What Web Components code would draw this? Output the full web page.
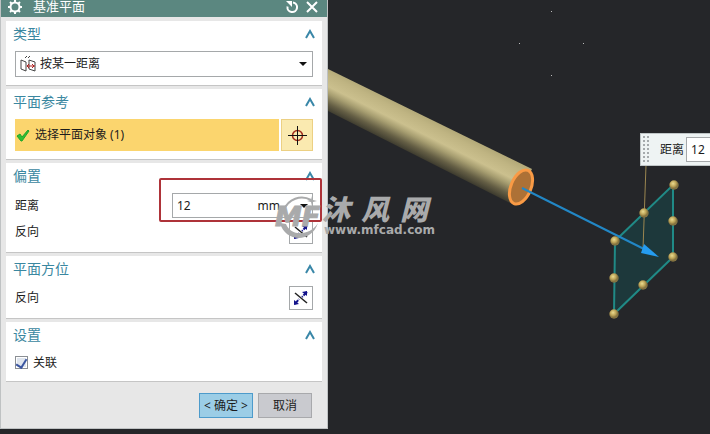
<!DOCTYPE html>
<html lang="zh-CN">
<head>
<meta charset="utf-8">
<title>基准平面</title>
<style>
    body {
        margin: 0;
        background: #252629;
        color: #1c1c1c;
        font: 12px/16px "Noto Sans", "Noto Sans CJK SC", sans-serif;
    }
</style>
</head>
<body>
<cad-app></cad-app>

<script>
class CadElement extends HTMLElement {
    constructor() {
        super()
        this.attachShadow({mode: "open"})
    }
    connectedCallback() {
        const template = document.createElement("template")
        template.innerHTML = `<style>
        * { box-sizing: border-box; }
        button, input, select { font: inherit; color: inherit; margin: 0; }
        svg { display: block; flex: none; }
        ${this.getStyles()}
        </style>${this.getMarkup()}`
        this.shadowRoot.replaceChildren(template.content.cloneNode(true))
    }
}

class DialogTitle extends CadElement {
    getMarkup() {
        return `
        <svg width="16" height="14" viewBox="0 0 16 14" fill="none" stroke="#fff" stroke-width="2">
            <circle cx="8" cy="7" r="4.500"/>
            <path d="M8 0v3M8 11v3M1 7h3M12 7h3M3 2l2 2M11 10l2 2M13 2l-2 2M5 10l-2 2"/>
        </svg>
        <h1><slot></slot></h1>
        <button aria-label="重置">
            <svg width="14" height="14" viewBox="0 0 14 14" fill="none" stroke="#fff" stroke-width="2">
                <path d="M8 2.500a4.800 4.800 0 1 1-5.500 4"/><path d="M1 1h6v6z" fill="#fff" stroke="none"/>
            </svg>
        </button>
        <button aria-label="关闭">
            <svg width="14" height="14" viewBox="0 0 14 14" stroke="#fff" stroke-width="2"><path d="M2 2l10 10M12 2L2 12"/></svg>
        </button>`
    }
    getStyles() {
        return `
        :host {
            display: flex;
            align-items: center;
            gap: 6px;
            height: 17px;
            padding: 0 8px 4px 6px;
            background: #5b8780;
            color: #fff;
        }
        h1 { flex: 1; margin: 0 0 0 4px; font-size: 13px; font-weight: 400; line-height: 13px; }
        button { border: 0; padding: 0; background: none; }`
    }
}

class DialogSection extends CadElement {
    getMarkup() {
        return `
        <header>
            <h2>${this.getAttribute("heading")}</h2>
            <button aria-label="折叠">
                <svg width="12" height="10" viewBox="0 0 12 10" fill="none" stroke="#3a87a8" stroke-width="2"><path d="M2 9l4-7 4 7"/></svg>
            </button>
        </header>
        <div class="body"><slot></slot></div>`
    }
    getStyles() {
        return `
        :host {
            display: block;
            padding: 0 9px 8px;
            background: #fff;
            box-shadow: 0 1px 0 #c5c5c5;
        }
        header { display: flex; align-items: center; justify-content: space-between; height: 30px; padding-bottom: 4px; }
        h2 { margin: 0 0 0 -2px; color: #3a87a0; font-size: 14px; font-weight: 400; line-height: 20px; }
        header button { border: 0; padding: 0; margin-right: -3px; background: none; }
        .body { display: grid; gap: 2px; }`
    }
}

class TypeSelect extends CadElement {
    getMarkup() {
        return `
        <svg width="16" height="18" viewBox="0 0 16 18" fill="none" stroke="#444">
            <path d="M1 5l5 2v9l-5-2zM9 5l6 2v9l-6-2zM5 3l2-2M8 3l2-2"/>
            <path d="M7 11h8M9 9l-2 2 2 2M12 9l2 2-2 2" stroke="#b02020"/>
        </svg>
        <select aria-label="类型"><option>按某一距离</option></select>
        <svg width="8" height="4" viewBox="0 0 8 4"><path d="M0 0h8L4 4z" fill="#111"/></svg>`
    }
    getStyles() {
        return `
        :host { display: flex; align-items: center; gap: 4px; height: 26px; padding: 0 5px 0 4px; border: 1px solid #a5a8aa; }
        select { flex: 1; height: 24px; padding: 0; border: 0; appearance: none; background: none; }`
    }
}

class PlanePicker extends CadElement {
    getMarkup() {
        return `
        <button class="pick">
            <svg width="14" height="14" viewBox="0 0 14 14"><path d="M1 8l3-2 2 3 6-7 1 1-7 10H5z" fill="#2fbe32" stroke="#22a52a"/></svg>
            <slot></slot>
        </button>
        <button class="target" aria-label="选择对象">
            <svg width="20" height="20" viewBox="0 0 20 20" fill="none">
                <circle cx="10.500" cy="10.500" r="5" stroke="#a02d1e" stroke-width="1.500"/>
                <path d="M10.500 1v19M1 10.500h19" stroke="#111"/>
            </svg>
        </button>`
    }
    getStyles() {
        return `
        :host { display: flex; gap: 2px; height: 32px; }
        button { display: flex; align-items: center; padding: 0; border: 0; background: #fbd56e; }
        .pick { flex: 1; gap: 5px; padding-left: 1px; }
        .target { width: 32px; justify-content: center; border: 1px solid #ecd083; background: #faeab0; }`
    }
}

class DistanceField extends CadElement {
    getMarkup() {
        return `
        <label for="distance">距离</label>
        <div class="field">
            <input id="distance" value="12">
            <span>mm</span>
            <button aria-label="单位"><svg width="8" height="4" viewBox="0 0 8 4"><path d="M0 0h8L4 4z" fill="#111"/></svg></button>
        </div>
        <div class="mark"></div>`
    }
    getStyles() {
        return `
        :host { position: relative; display: flex; align-items: center; height: 25px; }
        label { flex: 1; }
        .field { display: flex; align-items: center; width: 141px; height: 25px; padding: 0 4px; border: 1px solid #a5a8aa; }
        input { flex: 1; min-width: 0; padding: 0; border: 0; outline: 0; background: none; }
        button { margin-left: 20px; border: 0; padding: 0; background: none; }
        .mark { position: absolute; inset: -15px -9px -4px 144px; border: 2px solid #ae3339; border-radius: 2px; pointer-events: none; }`
    }
}

class ReverseRow extends CadElement {
    getMarkup() {
        return `
        <span>反向</span>
        <button aria-label="反向">
            <svg width="16" height="16" viewBox="0 0 16 16">
                <path d="M2 3l12 10" stroke="#222" stroke-width="1.500"/>
                <path d="M14 2L9 7M2 14l4-5" stroke="#14148c" stroke-width="2" stroke-dasharray="5 1"/>
                <path d="M9 2l5-1v5zM6 14l-5 1V10z" fill="#14148c"/>
            </svg>
        </button>`
    }
    getStyles() {
        return `
        :host { display: flex; align-items: center; justify-content: space-between; }
        button { display: grid; place-items: center; width: 24px; height: 24px; padding: 0; border: 1px solid #a5a8aa; background: #fff; }`
    }
}

class CheckRow extends CadElement {
    getMarkup() {
        return `<input type="checkbox" id="linked" checked><label for="linked"><slot></slot></label>`
    }
    getStyles() {
        return `
        :host { display: flex; align-items: center; gap: 5px; height: 21px; }
        input {
            display: grid;
            place-items: start center;
            width: 13px;
            height: 13px;
            appearance: none;
            border: 1px solid #8b8f94;
            background: #dfe5ee;
            box-shadow: inset 0 0 0 1px #fff;
        }
        input:checked::after {
            content: "";
            width: 5px;
            height: 9px;
            border: solid #3a55a0;
            border-width: 0 2px 2px 0;
            transform: rotate(32deg);
        }`
    }
}

class PlaneDialog extends CadElement {
    getMarkup() {
        return `
        <dialog-title>基准平面</dialog-title>
        <main>
            <dialog-section heading="类型"><type-select></type-select></dialog-section>
            <dialog-section heading="平面参考"><plane-picker>选择平面对象 (1)</plane-picker></dialog-section>
            <dialog-section heading="偏置"><distance-field></distance-field><reverse-row></reverse-row></dialog-section>
            <dialog-section heading="平面方位"><reverse-row></reverse-row></dialog-section>
            <dialog-section heading="设置"><check-row>关联</check-row></dialog-section>
        </main>
        <footer>
            <button class="ok">&lt; 确定 &gt;</button>
            <button>取消</button>
        </footer>`
    }
    getStyles() {
        return `
        :host { display: block; border: solid #bfc2c3; border-width: 0 1px 1px; background: #e7e7e7; }
        main { display: grid; gap: 4px; padding: 4px 5px 0; }
        footer { display: flex; justify-content: flex-end; gap: 5px; padding: 12px 15px 10px; }
        footer button { width: 54px; height: 25px; padding: 0; border: 1px solid #a8a9ac; background: #c9cacf; }
        footer .ok { border-color: #4d9bcb; background: #9bcde6; }`
    }
}

class ModelView extends CadElement {
    getMarkup() {
        const handles = [[346, 185], [316, 213], [345, 221], [287, 241], [345, 257], [286, 278], [315, 285], [286, 314]]
        const stars = [[223, 11], [191, 43], [255, 43], [223, 75]]
        return `
        <svg viewBox="0 0 382 434" preserveAspectRatio="xMinYMin">
            <defs>
                <linearGradient id="rod" gradientUnits="userSpaceOnUse" x1="109" y1="122" x2="91" y2="158">
                    <stop offset="0" stop-color="#b3a978"/>
                    <stop offset=".15" stop-color="#bfb482"/>
                    <stop offset=".42" stop-color="#cbc08e"/>
                    <stop offset=".58" stop-color="#a69d70"/>
                    <stop offset=".8" stop-color="#655f45"/>
                    <stop offset="1" stop-color="#39372c"/>
                </linearGradient>
                <radialGradient id="ball" cx=".4" cy=".35">
                    <stop offset="0" stop-color="#eadb91"/>
                    <stop offset=".6" stop-color="#bfa659"/>
                    <stop offset="1" stop-color="#857340"/>
                </radialGradient>
            </defs>
            <path d="M0 69L204 169 186 205 0 111z" fill="url(#rod)"/>
            <ellipse cx="193" cy="187" rx="10" ry="18" transform="rotate(23 193 187)" fill="#ad7136" stroke="#f99a45" stroke-width="3"/>
            <path d="M345 185V257L286 314 287 241z" fill="#1d383b" stroke="#208a86" stroke-width="2"/>
            <path d="M318 165L315 249" stroke="#9b8650"/>
            <path d="M194 188L316 249" stroke="#2287c6" stroke-width="2"/>
            <path d="M316 244L331 257 313 253z" fill="#259cf0"/>
            ${handles.map(([x, y]) => `<circle cx="${x}" cy="${y}" r="4.700" fill="url(#ball)"/>`).join("")}
            ${stars.map(([x, y]) => `<rect x="${x}" y="${y}" width="1" height="1" fill="#bbb"/>`).join("")}
        </svg>
        <div class="float">
            <i></i>
            <label for="offset">距离</label>
            <input id="offset" value="12">
        </div>`
    }
    getStyles() {
        return `
        :host { position: relative; display: block; overflow: hidden; }
        svg { width: 100%; }
        .float {
            position: absolute;
            top: 133px;
            left: 312px;
            right: 0;
            display: flex;
            align-items: center;
            height: 33px;
            border: 1px solid #bfc5c6;
            border-right: 0;
            background: #eef3f3;
        }
        i {
            width: 8px;
            height: 28px;
            margin-left: 2px;
            background: conic-gradient(transparent 75%, #a5aaac 0) 0 0 / 4px 4px;
        }
        label { margin: 0 2px 0 9px; white-space: nowrap; }
        input { flex: 1; min-width: 0; height: 25px; padding: 0 4px; border: 1px solid #a5a8aa; border-right: 0; background: #fff; }`
    }
}

class SiteWatermark extends CadElement {
    getMarkup() {
        return `
        <svg width="54" height="48" viewBox="0 0 54 48">
            <path d="M11 17A19 19 0 0 1 38 7" fill="none" stroke="#a9aaab" stroke-width="2"/>
            <path d="M7 30C12 49 38 51 45 30C37 43 18 44 13 31z" fill="#a9aaab"/>
            <path d="M39 3l1 4 4 1-4 1-1 4-1-4-4-1 4-1z" fill="#a9aaab"/>
            <text x="2" y="33" font-family="DejaVu Sans" font-size="27" font-weight="700" font-style="italic" fill="#a9aaab" stroke="#a9aaab">MF</text>
        </svg>
        <div>
            <strong><span>沐</span><span>风</span><span>网</span></strong>
            <small>www.mfcad.com</small>
        </div>`
    }
    getStyles() {
        return `
        :host { display: flex; color: #a9aaab; pointer-events: none; }
        strong { display: flex; gap: 11px; margin-left: -5px; font: italic 900 28px/30px "Noto Sans CJK SC", sans-serif; }
        small { display: block; margin-left: -3px; font: 700 12px/14px "DejaVu Sans", sans-serif; }`
    }
}

class CadApp extends CadElement {
    getMarkup() {
        return `<plane-dialog></plane-dialog><model-view></model-view><site-watermark></site-watermark>`
    }
    getStyles() {
        return `
        :host { position: relative; display: grid; grid-template-columns: minmax(328px, 46%) 1fr; align-items: start; }
        site-watermark { position: absolute; left: 273px; top: 193px; }`
    }
}

customElements.define("dialog-title", DialogTitle)
customElements.define("dialog-section", DialogSection)
customElements.define("type-select", TypeSelect)
customElements.define("plane-picker", PlanePicker)
customElements.define("distance-field", DistanceField)
customElements.define("reverse-row", ReverseRow)
customElements.define("check-row", CheckRow)
customElements.define("plane-dialog", PlaneDialog)
customElements.define("model-view", ModelView)
customElements.define("site-watermark", SiteWatermark)
customElements.define("cad-app", CadApp)
</script>
</body>
</html>
